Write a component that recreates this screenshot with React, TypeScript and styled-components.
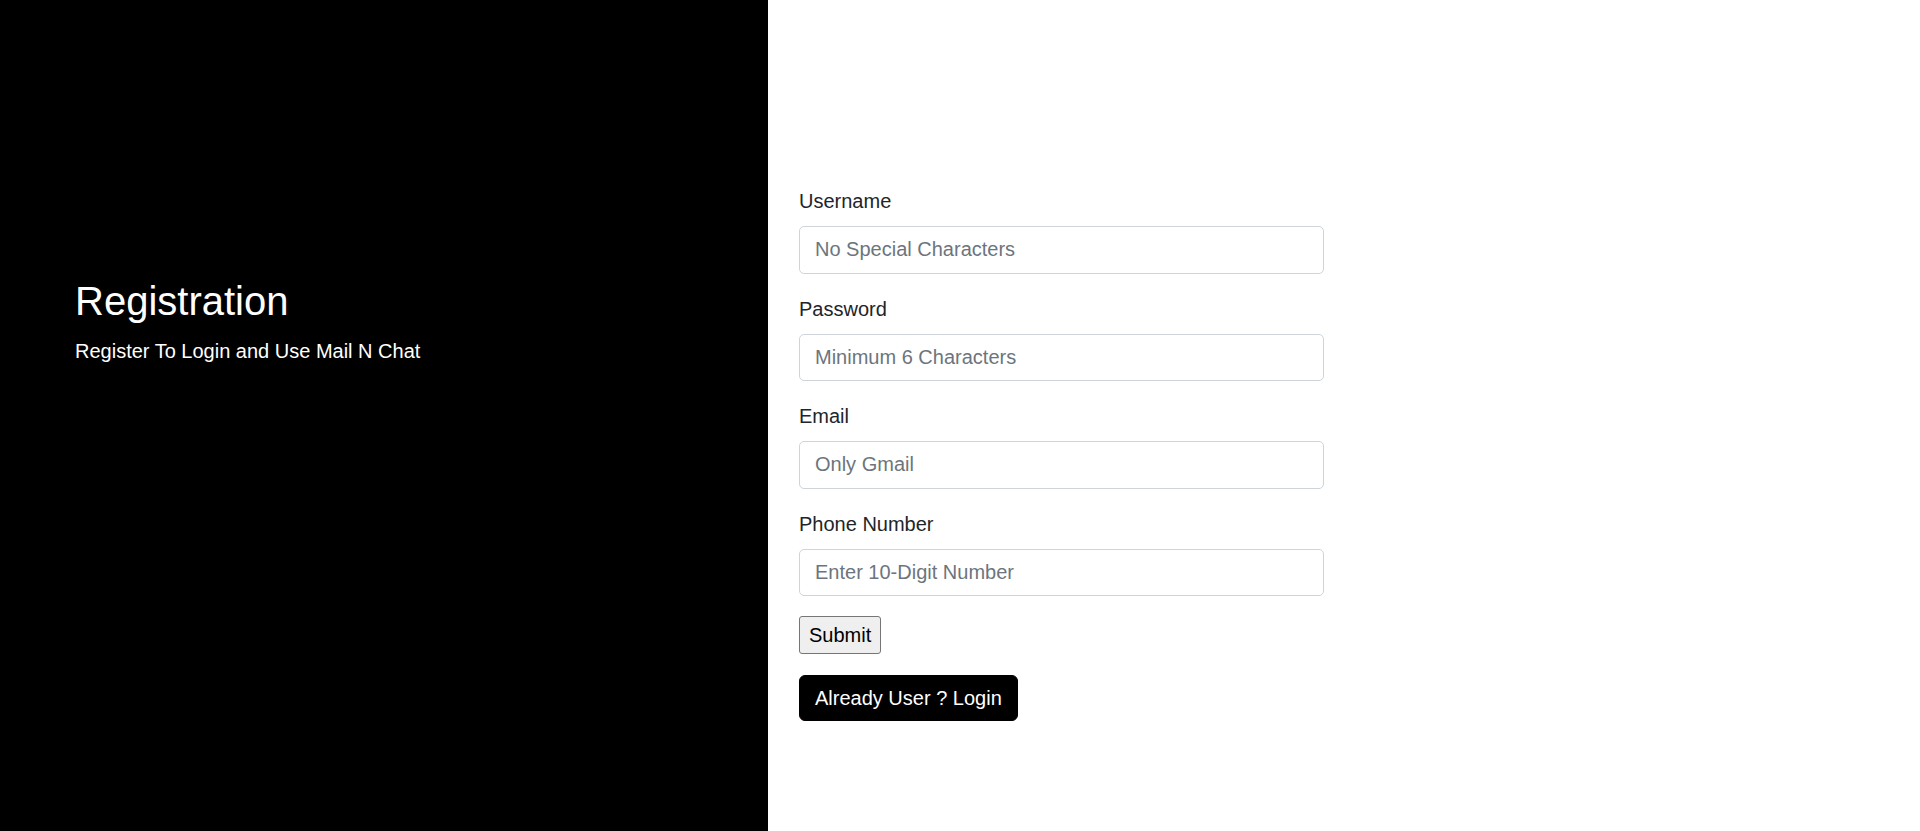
import * as React from 'react'
import styled, { createGlobalStyle } from 'styled-components'

const GlobalStyle = createGlobalStyle`
  html, body {
    margin: 0;
    padding: 0;
    height: 100%;
  }
  body {
    font-family: "Liberation Sans", Arial, sans-serif;
    font-size: 20px;
    line-height: 1.5;
    color: #212529;
    background: #fff;
  }
  *, *::before, *::after {
    box-sizing: border-box;
  }
`

const fields = [
  { id: 'username', label: 'Username', type: 'text', placeholder: 'No Special Characters' },
  { id: 'password', label: 'Password', type: 'password', placeholder: 'Minimum 6 Characters' },
  { id: 'email', label: 'Email', type: 'email', placeholder: 'Only Gmail' },
  { id: 'phone', label: 'Phone Number', type: 'tel', placeholder: 'Enter 10-Digit Number' },
]

export default function App() {
  return (
    <>
      <GlobalStyle />
      <Page>
        <Intro>
          <Title>Registration</Title>
          <Subtitle>Register To Login and Use Mail N Chat</Subtitle>
        </Intro>
        <FormSide>
          <Form onSubmit={e => e.preventDefault()}>
            {fields.map(f => (
              <Field key={f.id}>
                <Label htmlFor={f.id}>{f.label}</Label>
                <Input id={f.id} type={f.type} placeholder={f.placeholder} />
              </Field>
            ))}
            <SubmitButton type="submit">Submit</SubmitButton>
            <LoginRow>
              <LoginButton type="button">Already User ? Login</LoginButton>
            </LoginRow>
          </Form>
        </FormSide>
      </Page>
    </>
  )
}

const Page = styled.div`
  display: flex;
  height: 100vh;
  min-height: 831px;
`

const Intro = styled.section`
  flex: 0 0 40%;
  background: #000;
  color: #fff;
  padding: 277px 0 0 75px;
`

const Title = styled.h2`
  margin: 0 0 11px;
  font-size: 40px;
  font-weight: 400;
  line-height: 48px;
`

const Subtitle = styled.p`
  margin: 0;
  font-size: 20px;
  line-height: 30px;
`

const FormSide = styled.section`
  flex: 1 1 auto;
  padding: 186px 0 0 31px;
`

const Form = styled.form`
  width: 525px;
`

const Field = styled.div`
  margin-bottom: 20px;
`

const Label = styled.label`
  display: block;
  margin-bottom: 10px;
  font-size: 20px;
  line-height: 30px;
  color: #212529;
`

const Input = styled.input`
  display: block;
  width: 100%;
  height: 47.5px;
  padding: 7.5px 15px;
  font-family: inherit;
  font-size: 20px;
  line-height: 30px;
  color: #212529;
  background: #fff;
  border: 1px solid #ced4da;
  border-radius: 5px;
  outline: none;

  &::placeholder {
    color: #6c757d;
    opacity: 1;
  }
`

const SubmitButton = styled.button`
  display: block;
  height: 38px;
  padding: 0 9px;
  font-family: inherit;
  font-size: 20px;
  line-height: 30px;
  color: #000;
  background: #efefef;
  border: 1px solid #767676;
  border-radius: 3px;
`

const LoginRow = styled.div`
  margin-top: 21px;
`

const LoginButton = styled.button`
  display: inline-block;
  height: 46px;
  padding: 0 15px;
  font-family: inherit;
  font-size: 20px;
  line-height: 30px;
  color: #fff;
  background: #000;
  border: 1px solid #000;
  border-radius: 6px;
  cursor: pointer;
`
